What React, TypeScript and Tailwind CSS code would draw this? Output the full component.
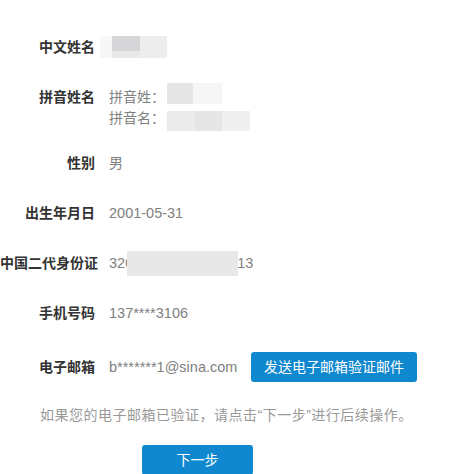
import React from "react";

const font = { fontFamily: '"Liberation Sans", "Noto Sans CJK SC", sans-serif' };

function Label({ children }: { children: React.ReactNode }) {
  return (
    <div className="w-[95px] shrink-0 text-right font-bold text-[#333] whitespace-nowrap">
      {children}
    </div>
  );
}

export default function App() {
  return (
    <div
      className="w-[450px] h-[474px] overflow-hidden bg-white text-[14px] leading-[20px] text-[#808080]"
      style={font}
    >
      <div className="flex flex-col pt-[37px]">
        {/* 中文姓名 */}
        <div className="flex items-center h-[20px]">
          <Label>中文姓名</Label>
          <div className="ml-[5px] flex h-[22px]">
            <div className="w-[12px] bg-[#f7f7f7]" />
            <div className="w-[28px] flex flex-col">
              <div className="h-[15px] bg-[#d6d6d8]" />
              <div className="flex-1 bg-[#e8e8e8]" />
            </div>
            <div className="w-[27px] bg-[#ededed]" />
          </div>
        </div>

        {/* 拼音姓名 */}
        <div className="flex mt-[30px]">
          <Label>拼音姓名</Label>
          <div className="ml-[14px] flex flex-col leading-[21px]">
            <div className="flex items-start h-[21px]">
              <span>拼音姓：</span>
              <div className="ml-[2px] flex h-[21px] -mt-[4px]">
                <div className="w-[26px] bg-[#e6e6e6]" />
                <div className="w-[29px] bg-[#f6f6f6]" />
              </div>
            </div>
            <div className="flex items-start h-[21px]">
              <span>拼音名：</span>
              <div className="ml-[2px] flex h-[20px] mt-[3px]">
                <div className="w-[28px] bg-[#ebebeb]" />
                <div className="w-[27px] bg-[#e6e6e6]" />
                <div className="w-[28px] bg-[#efefef]" />
              </div>
            </div>
          </div>
        </div>

        {/* 性别 */}
        <div className="flex items-center h-[20px] mt-[24px]">
          <Label>性别</Label>
          <div className="ml-[14px]">男</div>
        </div>

        {/* 出生年月日 */}
        <div className="flex items-center h-[20px] mt-[30px]">
          <Label>出生年月日</Label>
          <div className="ml-[14px] text-[14.5px]">2001-05-31</div>
        </div>

        {/* 身份证 */}
        <div className="flex items-center h-[20px] mt-[30px]">
          <Label>中国二代身份证</Label>
          <div className="ml-[14px] flex items-center text-[14.5px]">
            <span>320</span>
            <div className="-ml-[6px] w-[111px] h-[25px] bg-[#e8e8e8]" />
            <span className="-ml-[1px]">13</span>
          </div>
        </div>

        {/* 手机号码 */}
        <div className="flex items-center h-[20px] mt-[30px]">
          <Label>手机号码</Label>
          <div className="ml-[14px] text-[14.5px]">137****3106</div>
        </div>

        {/* 电子邮箱 */}
        <div className="flex items-center h-[30px] mt-[29px]">
          <Label>电子邮箱</Label>
          <div className="ml-[14px] whitespace-nowrap text-[14.5px] w-[133px]">b*******1@sina.com</div>
          <button className="ml-[9px] w-[166px] h-[30px] rounded-[3px] bg-[#0f88cf] text-white text-[14px]">
            发送电子邮箱验证邮件
          </button>
        </div>

        {/* message */}
        <div className="mt-[23px] pl-[40px] text-[#999] whitespace-nowrap tracking-[0.5px]">
          如果您的电子邮箱已验证，请点击“下一步”进行后续操作。
        </div>

        <div className="mt-[20px] pl-[142px]">
          <button className="w-[111px] h-[30px] rounded-[3px] bg-[#0f88cf] text-white text-[14px]">
            下一步
          </button>
        </div>
      </div>
    </div>
  );
}
